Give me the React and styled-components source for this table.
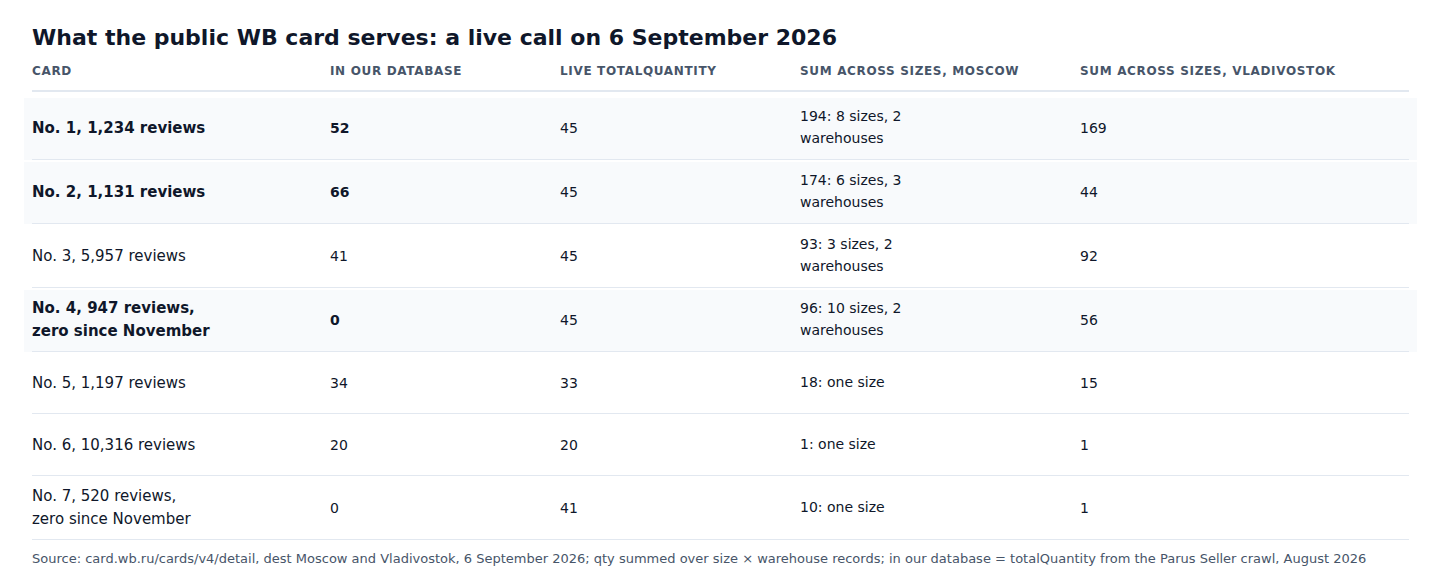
import React from "react";
import styled, { createGlobalStyle } from "styled-components";

const Global = createGlobalStyle`
  html, body { margin: 0; padding: 0; background: #ffffff; }
  body { font-family: "DejaVu Sans", "Liberation Sans", sans-serif; color: #0f172a; }
`;

const Page = styled.main`
  padding: 24px 31px 0 32px;
`;

const Title = styled.h1`
  margin: 0 0 11px;
  font-size: 22px;
  line-height: 28px;
  font-weight: 700;
  color: #0f172a;
`;

const COLS = "298px 230px 240px 280px 1fr";

const HeadRow = styled.div`
  display: grid;
  grid-template-columns: ${COLS};
  padding: 0 0 11px;
  border-bottom: 2px solid #e2e8f0;
  margin-bottom: 6px;
`;

const HeadCell = styled.div`
  font-size: 12px;
  line-height: 16px;
  font-weight: 700;
  letter-spacing: 0.055em;
  text-transform: uppercase;
  color: #475569;
`;

const Row = styled.div`
  display: grid;
  grid-template-columns: ${COLS};
  align-items: center;
  min-height: 60px;
  box-sizing: border-box;
  padding: 7px 0 10px;
  border-bottom: 1px solid #e2e8f0;
  margin-top: ${(p) => (p.$first ? "0" : "2px")};
  background: ${(p) => (p.$hl ? "#f8fafc" : "transparent")};
  box-shadow: ${(p) =>
    p.$hl ? "-8px 0 0 #f8fafc, 8px 0 0 #f8fafc" : "none"};
`;

const Cell = styled.div`
  font-size: 14px;
  line-height: 22px;
  padding-top: 1px;
  font-weight: ${(p) => (p.$bold ? 700 : 400)};
  color: #0f172a;
`;

const WrapCell = styled.div`
  font-size: 14px;
  line-height: 22px;
  color: #0f172a;
  max-width: 170px;
`;

const CardCell = styled.div`
  font-size: 15px;
  line-height: 23px;
  margin: 0 0 -2px;
  font-weight: ${(p) => (p.$bold ? 700 : 400)};
  color: #0f172a;
  max-width: 181px;
`;

const Source = styled.p`
  margin: 10px 0 0;
  font-size: 13px;
  line-height: 18px;
  color: #475569;
`;

const heads = [
  "Card",
  "In our database",
  "Live totalQuantity",
  "Sum across sizes, Moscow",
  "Sum across sizes, Vladivostok",
];

const rows = [
  { hl: true, card: "No. 1, 1,234 reviews", db: "52", live: "45", msk: "194: 8 sizes, 2 warehouses", vl: "169" },
  { hl: true, card: "No. 2, 1,131 reviews", db: "66", live: "45", msk: "174: 6 sizes, 3 warehouses", vl: "44" },
  { hl: false, card: "No. 3, 5,957 reviews", db: "41", live: "45", msk: "93: 3 sizes, 2 warehouses", vl: "92" },
  { hl: true, card: "No. 4, 947 reviews, zero since November", db: "0", live: "45", msk: "96: 10 sizes, 2 warehouses", vl: "56" },
  { hl: false, card: "No. 5, 1,197 reviews", db: "34", live: "33", msk: "18: one size", vl: "15" },
  { hl: false, card: "No. 6, 10,316 reviews", db: "20", live: "20", msk: "1: one size", vl: "1" },
  { hl: false, card: "No. 7, 520 reviews, zero since November", db: "0", live: "41", msk: "10: one size", vl: "1" },
];

export default function App() {
  return (
    <>
      <Global />
      <Page>
        <Title>What the public WB card serves: a live call on 6 September 2026</Title>
        <HeadRow>
          {heads.map((h) => (
            <HeadCell key={h}>{h}</HeadCell>
          ))}
        </HeadRow>
        {rows.map((r, i) => (
          <Row key={i} $hl={r.hl} $first={i === 0}>
            <CardCell $bold={r.hl}>{r.card}</CardCell>
            <Cell $bold={r.hl}>{r.db}</Cell>
            <Cell>{r.live}</Cell>
            <WrapCell>{r.msk}</WrapCell>
            <Cell>{r.vl}</Cell>
          </Row>
        ))}
        <Source>
          Source: card.wb.ru/cards/v4/detail, dest Moscow and Vladivostok, 6 September 2026; qty summed over size × warehouse records; in our database = totalQuantity from the Parus Seller crawl, August 2026
        </Source>
      </Page>
    </>
  );
}
